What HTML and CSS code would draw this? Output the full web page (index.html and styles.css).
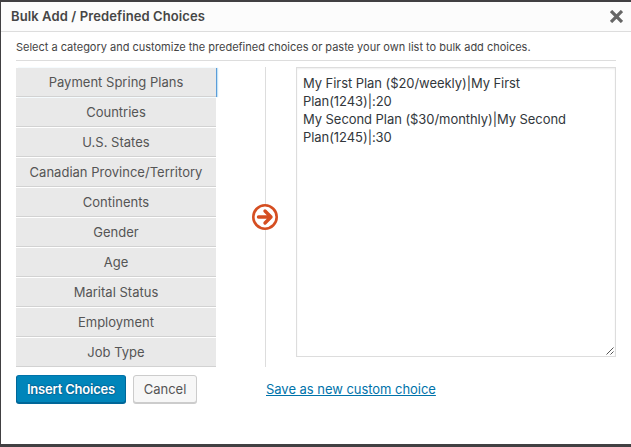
FILE: index.html
```html
<!DOCTYPE html>
<html lang="en">
<head>
<meta charset="utf-8">
<title>Bulk Add / Predefined Choices</title>
<link rel="stylesheet" href="styles.css">
</head>
<body>
<div class="modal">
  <header class="titlebar">
    <h1 class="title">Bulk Add / Predefined Choices</h1>
    <svg class="close" viewBox="0 0 12 12"><path d="M2 2l8 8M10 2l-8 8"/></svg>
  </header>
  <main class="content">
    <p class="intro"><span>Select a category and customize the predefined choices or paste your own list to bulk add choices.</span></p>
    <div class="panels">
      <ul class="categories">
        <li class="active"><span>Payment Spring Plans</span></li>
        <li><span>Countries</span></li>
        <li><span>U.S. States</span></li>
        <li><span>Canadian Province/Territory</span></li>
        <li><span>Continents</span></li>
        <li><span>Gender</span></li>
        <li><span>Age</span></li>
        <li><span>Marital Status</span></li>
        <li><span>Employment</span></li>
        <li><span>Job Type</span></li>
      </ul>
      <div class="divider">
        <svg class="arrow" viewBox="0 0 26 26"><circle cx="13" cy="13" r="11.7"/><path d="M6.5 13H19M13 7l6 6-6 6"/></svg>
      </div>
      <div class="editor"><div>My First Plan ($20/weekly)|My First<br>Plan(1243)|:20<br>My Second Plan ($30/monthly)|My Second<br>Plan(1245)|:30</div>
        <svg class="grip" viewBox="0 0 8 8"><path d="M0.5 7.5l7-7M4.5 7.5l3-3"/></svg>
      </div>
    </div>
    <footer class="actions">
      <button class="button primary"><span>Insert Choices</span></button>
      <button class="button"><span>Cancel</span></button>
      <a class="save">Save as new custom choice</a>
    </footer>
  </main>
</div>
</body>
</html>
```
FILE: styles.css
```css
* { box-sizing: border-box; }
body {
  margin: 0;
  height: 447px;
  padding: 2px 0 3px 1px;
  overflow: hidden;
  background: #414042;
  font-family: Inter, "Liberation Sans", sans-serif;
  font-size: 13px;
  color: #444;
}
.modal { height: 442px; background: #fff; }
.titlebar {
  display: flex;
  align-items: center;
  justify-content: space-between;
  height: 30px;
  padding: 0 8px 0 10px;
  background: #fcfcfc;
  border-bottom: 1px solid #ddd;
}
.title { margin: 0; font-size: 13px; line-height: 29px; font-weight: 600; color: #464646; letter-spacing: 0.1px; }
.close { width: 13px; height: 13px; margin-top: -1px; fill: none; stroke: #666; stroke-width: 3; }
.close path { stroke-linecap: square; }
.content { padding: 0 15px; }
.intro {
  height: 29px;
  margin: 0 0 6px;
  border-bottom: 1px solid #ddd;
  font-size: 11px;
  line-height: 31px;
  letter-spacing: -0.01px;
  white-space: nowrap;
}
.panels { display: flex; height: 300px; }
.categories { width: 200px; margin: 0; padding: 1px 0 0; list-style: none; }
.categories li {
  height: 29px;
  margin-bottom: 1px;
  background: #e9e9e9;
  border-bottom: 1px solid #d2d2d2;
  color: #555;
  text-align: center;
  line-height: 28px;
  letter-spacing: 0.01px;
}
.categories .active { box-shadow: 1px 0 0 #5b9dd9, 2px 0 1px #c5e4f7; }
.divider {
  display: flex;
  align-items: center;
  width: 27px;
  margin-left: 36px;
  background: linear-gradient(#ddd, #ddd) 13px 0 / 1px 100% no-repeat;
}
.arrow { flex: none; width: 26px; height: 26px; }
.arrow circle { fill: #fff; stroke: #d54e21; stroke-width: 2.6; }
.arrow path { fill: none; stroke: #d54e21; stroke-width: 3.4; stroke-linecap: round; stroke-linejoin: round; }
.editor {
  position: relative;
  width: 320px;
  height: 290px;
  margin-left: 17px;
  padding: 6px;
  border: 1px solid #ddd;
  box-shadow: inset 0 1px 2px rgba(0, 0, 0, .07);
  color: #32373c;
  line-height: 18px;
  letter-spacing: -0.06px;
  white-space: nowrap;
}
.grip { position: absolute; right: 1px; bottom: 1px; width: 8px; height: 8px; fill: none; stroke: #555; stroke-width: 1; }
.actions { display: flex; align-items: flex-start; padding-top: 8px; }
.button {
  width: 64px;
  height: 28px;
  padding: 0;
  border: 1px solid #ccc;
  border-radius: 3px;
  background: #f7f7f7;
  box-shadow: 0 1px 0 #ccc;
  color: #555;
  font: 13px/26px Inter, "Liberation Sans", sans-serif;
}
.primary {
  width: 110px;
  margin-right: 7px;
  border-color: #0073aa #006799 #006799;
  background: #0085ba;
  box-shadow: 0 1px 0 #006799;
  color: #fff;
  font-weight: 600;
  letter-spacing: -0.2px;
  text-shadow: 0 -1px 1px #006799, 1px 0 1px #006799, 0 1px 1px #006799;
}
.save { margin-left: 69px; line-height: 28px; letter-spacing: -0.04px; color: #0073aa; text-decoration: underline; white-space: nowrap; }
```
